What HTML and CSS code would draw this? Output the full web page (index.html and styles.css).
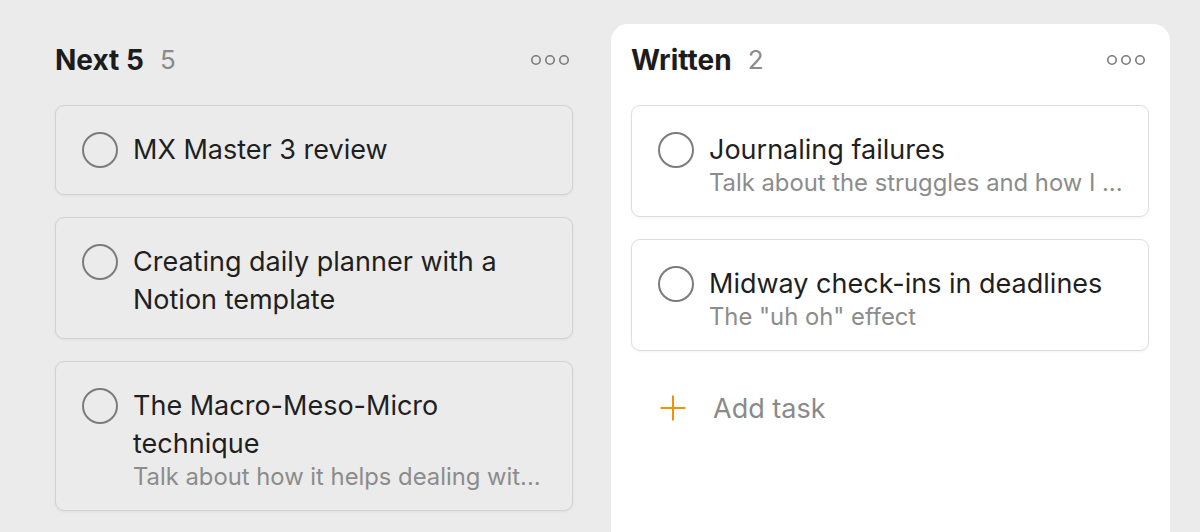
FILE: index.html
```html
<!DOCTYPE html>
<html lang="en">
<head>
<meta charset="utf-8">
<title>Board</title>
<link rel="stylesheet" href="styles.css">
</head>
<body>
<div class="board">
  <section class="column">
    <header class="column-header">
      <h2 class="column-title">Next 5</h2>
      <span class="column-count">5</span>
      <svg class="more" width="40" height="12" viewBox="0 0 40 12" aria-hidden="true">
        <circle cx="6" cy="6" r="4.2"/><circle cx="20" cy="6" r="4.2"/><circle cx="34" cy="6" r="4.2"/>
      </svg>
    </header>
    <div class="cards">
      <article class="card">
        <span class="check"></span>
        <div class="card-body">
          <div class="card-title">MX Master 3 review</div>
        </div>
      </article>
      <article class="card">
        <span class="check"></span>
        <div class="card-body">
          <div class="card-title">Creating daily planner with a Notion template</div>
        </div>
      </article>
      <article class="card">
        <span class="check"></span>
        <div class="card-body">
          <div class="card-title">The Macro-Meso-Micro technique</div>
          <div class="card-desc">Talk about how it helps dealing wit...</div>
        </div>
      </article>
    </div>
  </section>

  <section class="column column--active">
    <header class="column-header">
      <h2 class="column-title">Written</h2>
      <span class="column-count">2</span>
      <svg class="more" width="40" height="12" viewBox="0 0 40 12" aria-hidden="true">
        <circle cx="6" cy="6" r="4.2"/><circle cx="20" cy="6" r="4.2"/><circle cx="34" cy="6" r="4.2"/>
      </svg>
    </header>
    <div class="cards">
      <article class="card">
        <span class="check"></span>
        <div class="card-body">
          <div class="card-title">Journaling failures</div>
          <div class="card-desc">Talk about the struggles and how I ...</div>
        </div>
      </article>
      <article class="card">
        <span class="check"></span>
        <div class="card-body">
          <div class="card-title">Midway check-ins in deadlines</div>
          <div class="card-desc">The "uh oh" effect</div>
        </div>
      </article>
    </div>
    <div class="add-task">
      <svg class="plus" width="26" height="26" viewBox="0 0 26 26" aria-hidden="true">
        <path d="M13 0.5V25.5M0.5 13H25.5"/>
      </svg>
      <span>Add task</span>
    </div>
  </section>
</div>
</body>
</html>
```

FILE: styles.css
```css
* { box-sizing: border-box; }

html, body {
  margin: 0;
  height: 100%;
  overflow: hidden;
}

body {
  background: #ebebeb;
  font-family: Inter, "Noto Sans", "Liberation Sans", sans-serif;
  color: #1f1f1f;
}

.board {
  display: flex;
  gap: 17px;
  padding: 24px 0 0 35px;
  height: 100%;
}

.column {
  width: 559px;
  flex: none;
  padding: 18px 21px 0 20px;
  border-radius: 17px 17px 0 0;
}

.column--active {
  background: #ffffff;
}

.column-header {
  display: flex;
  align-items: center;
  height: 36px;
  margin-bottom: 27px;
}

.column-title {
  margin: 0;
  font-size: 28px;
  font-weight: 700;
  line-height: 36px;
  color: #1c1c1c;
}

.column-count {
  margin-left: 16px;
  font-size: 26px;
  line-height: 36px;
  color: #8a8a8a;
}

.more {
  margin-left: auto;
  margin-right: 3px;
  fill: none;
  stroke: #7a7a7a;
  stroke-width: 1.6;
}

.cards {
  display: flex;
  flex-direction: column;
  gap: 22px;
}

.card {
  display: flex;
  align-items: flex-start;
  min-height: 90px;
  padding: 25px 26px 19px 26px;
  border: 1px solid #d2d2d2;
  border-radius: 9px;
  background: #ebebeb;
  box-shadow: 0 1px 3px rgba(0, 0, 0, 0.05);
}

.column--active .card {
  border-color: #dedede;
  background: #ffffff;
}

.check {
  flex: none;
  width: 36px;
  height: 36px;
  margin-top: 1px;
  margin-right: 15px;
  border: 2px solid #7c7c7c;
  border-radius: 50%;
}

.card-body {
  flex: 1;
  min-width: 0;
}

.card-title {
  font-size: 27px;
  line-height: 38px;
  color: #1f1f1f;
}

.card-desc {
  font-size: 23.8px;
  line-height: 28px;
  color: #8c8c8c;
  white-space: nowrap;
}

.add-task {
  display: flex;
  align-items: center;
  margin-top: 42px;
  padding-left: 29px;
  height: 30px;
  font-size: 27px;
  color: #8a8a8a;
}

.plus {
  flex: none;
  margin-right: 27px;
  fill: none;
  stroke: #f39200;
  stroke-width: 2;
}
```
